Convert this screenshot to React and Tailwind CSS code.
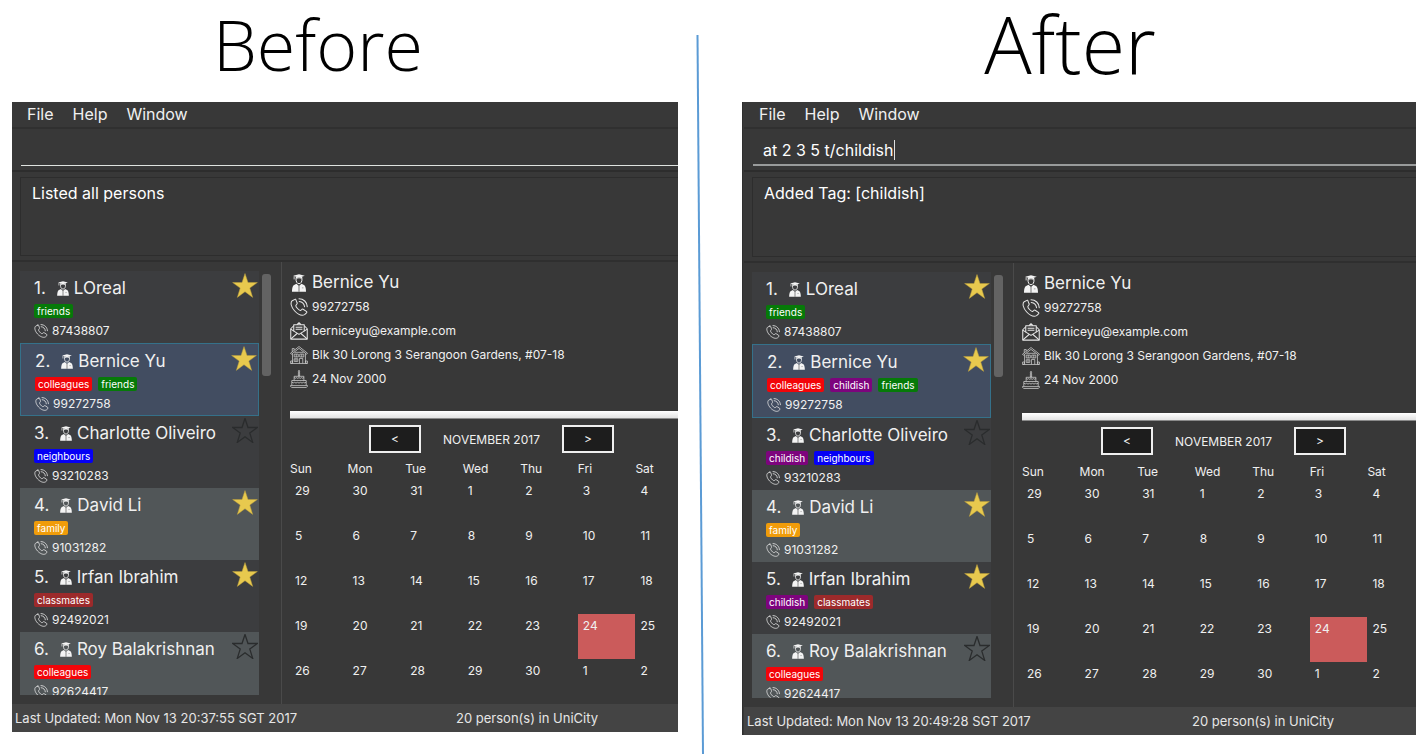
import React from "react";

const PEOPLE = [
  { name: "LOreal", phone: "87438807", star: true, before: ["friends"], after: ["friends"] },
  { name: "Bernice Yu", phone: "99272758", star: true, before: ["colleagues", "friends"], after: ["colleagues", "childish", "friends"] },
  { name: "Charlotte Oliveiro", phone: "93210283", star: false, before: ["neighbours"], after: ["childish", "neighbours"] },
  { name: "David Li", phone: "91031282", star: true, before: ["family"], after: ["family"] },
  { name: "Irfan Ibrahim", phone: "92492021", star: true, before: ["classmates"], after: ["childish", "classmates"] },
  { name: "Roy Balakrishnan", phone: "92624417", star: false, before: ["colleagues"], after: ["colleagues"] },
];

const TAG_COLORS = {
  friends: "bg-[#067a08]",
  colleagues: "bg-[#f20509]",
  childish: "bg-[#7d047d]",
  neighbours: "bg-[#0500f5]",
  family: "bg-[#f09c0a]",
  classmates: "bg-[#9c2a2b]",
};

const DAYS = ["Sun", "Mon", "Tue", "Wed", "Thu", "Fri", "Sat"];
const WEEKS = [
  [29, 30, 31, 1, 2, 3, 4],
  [5, 6, 7, 8, 9, 10, 11],
  [12, 13, 14, 15, 16, 17, 18],
  [19, 20, 21, 22, 23, 24, 25],
  [26, 27, 28, 29, 30, 1, 2],
];

function GraduateIcon({ className }) {
  return (
    <svg viewBox="0 0 16 20" className={className} aria-hidden="true">
      <path d="M8 0.4 L14.4 2 L8 4.2 L1.6 2 Z" fill="#f4f4f4" />
      <path d="M4.4 2.8 V5.2 Q8 4 11.6 5.2 V2.8 L8 4.2 Z" fill="#f4f4f4" />
      <path d="M2.6 2.4 V6" stroke="#f4f4f4" strokeWidth="0.9" />
      <path d="M4.7 5 C4.4 8.6 6 10.8 8 10.8 C10 10.8 11.6 8.6 11.3 5" fill="none" stroke="#f4f4f4" strokeWidth="1.1" />
      <path d="M5.2 10.8 L8 13.2 L10.8 10.8 L14 12.4 C15.4 13.8 15.8 17 15.8 19.8 H0.2 C0.2 17 0.6 13.8 2 12.4 Z" fill="#f4f4f4" />
      <path d="M8 13 V19.8" stroke="#555" strokeWidth="0.9" />
      <path d="M11.2 15.4 h1.8" stroke="#777" strokeWidth="0.7" />
    </svg>
  );
}

function PhoneIcon({ className }) {
  return (
    <svg viewBox="0 0 24 24" className={className} fill="none" stroke="#e6e6e6" strokeWidth="1.4" strokeLinejoin="round" strokeLinecap="round" aria-hidden="true">
      <path d="M6.5 1.8 L3 3.6 C0 6 1.5 12 6 17 C10.5 21.8 16 24 19.5 22.2 L22 19.9 C22.6 19.2 22.4 18.4 21.8 17.8 L17.5 15 C16.8 14.6 16 14.8 15.5 15.4 L14.3 16.4 C13.5 17 12 16.2 10 14 C8 11.7 7.4 10.4 8 9.6 L9.2 8 C9.7 7.4 9.7 6.8 9.3 6.1 L7.9 2.5 C7.6 1.8 7.1 1.5 6.5 1.8 Z" />
      <path d="M12 1 C18 1 22.8 5.5 23 11.5" />
      <path d="M12.3 4.6 C16.5 5 19 7.8 19.4 11.7" />
    </svg>
  );
}

function MailIcon({ className }) {
  return (
    <svg viewBox="0 0 24 24" className={className} fill="none" stroke="#e6e6e6" strokeWidth="1.4" strokeLinejoin="round" aria-hidden="true">
      <path d="M5 5 L1 9 V22.8 H23 V9 L19 5" />
      <path d="M9.3 3.6 L12 1 L14.7 3.6" />
      <path d="M5 12.2 V3.7 H19 V12.2" />
      <path d="M7.5 7 H16.5 M7.5 9.6 H16.5" />
      <path d="M1 9.5 L12 16.5 L23 9.5" />
      <path d="M1.2 22.6 L9.8 15 M22.8 22.6 L14.2 15" />
    </svg>
  );
}

function HouseIcon({ className }) {
  return (
    <svg viewBox="0 0 24 24" className={className} fill="none" stroke="#d2d2d2" strokeWidth="1" strokeLinejoin="round" aria-hidden="true">
      <path d="M12 0.7 L23.3 9.6 L22.2 11 L12 3.2 L1.8 11 L0.7 9.6 Z" />
      <path d="M3 7.6 V3.4 H5.6 V5.6" />
      <path d="M3.4 10 V22 M20.6 10 V22" />
      <path d="M6 8.4 H18" />
      <path d="M5.6 10.8 H11 V14.6 H5.6 Z M8.3 10.8 V14.6 M13 10.8 H18.4 V14.6 H13 Z M15.7 10.8 V14.6" />
      <path d="M12.6 23 V16.6 H17 V23 M5.6 17 H10.4 V20.5 H5.6 Z M8 17 V20.5" />
      <path d="M0.6 23.3 H23.4 M0.8 20 H3.4 V23 H0.8 Z M20.6 20 H23.2 V23 H20.6 Z" />
    </svg>
  );
}

function CakeIcon({ className }) {
  return (
    <svg viewBox="0 0 24 24" className={className} fill="none" stroke="#d2d2d2" strokeWidth="1" strokeLinejoin="round" aria-hidden="true">
      <path d="M12 0.2 C13.2 1.6 13 3 12 3 C11 3 10.8 1.6 12 0.2 Z" />
      <path d="M11.2 3.4 H12.8 V8 H11.2 Z" />
      <path d="M5.5 14 V8.4 H18.5 V14" />
      <path d="M5.5 10 Q7 12 8.6 10.2 Q10.2 12 12 10.2 Q13.6 12 15.4 10.2 Q17 12 18.5 10" />
      <path d="M2.4 20.6 V14 H21.6 V20.6" />
      <path d="M2.4 16 Q4.2 18.4 6 16.4 Q8 18.4 10 16.4 Q12 18.4 14 16.4 Q16 18.4 18 16.4 Q20 18.4 21.6 16" />
      <path d="M0.6 20.8 H23.4 V21.6 L21.8 23.3 H2.2 L0.6 21.6 Z" />
    </svg>
  );
}

function StarIcon({ filled }) {
  return (
    <svg viewBox="0 0 26 25" className="h-[25px] w-[26px]" role="img" aria-label={filled ? "Favourite" : "Not favourite"}>
      <path
        d="M13 0.5 L16 9.5 L25.4 9.5 L17.8 15.1 L20.7 24.4 L13 18.7 L5.3 24.4 L8.2 15.1 L0.6 9.5 L10 9.5 Z"
        fill={filled ? "#e8c94e" : "none"}
        stroke={filled ? "#b89c3c" : "#2a2c2d"}
        strokeWidth={filled ? "0.5" : "1.3"}
      />
    </svg>
  );
}

function PersonRow({ person, index, tags, selected, selectedHeight }) {
  const tone = selected
    ? `border border-[#35718a] bg-[#424d61] ${selectedHeight}`
    : `h-[72px] ${index % 2 ? "bg-[#515658]" : "bg-[#3c3d3f]"}`;
  return (
    <li className={`relative shrink-0 overflow-hidden pl-[14px] pt-[6px] ${tone}`}>
      <div className="flex h-[22px] items-center text-[17px] leading-[22px]">
        <span className="mr-[11px]">{index + 1}.</span>
        <GraduateIcon className="mr-[5px] h-[15px] w-[12px]" />
        <span className="whitespace-nowrap">{person.name}</span>
      </div>
      <div className="mt-[5px] flex gap-[6px]">
        {tags.map((tag) => (
          <span key={tag} className={`h-[14px] rounded-[2px] px-[3px] text-[10px] leading-[14px] text-white ${TAG_COLORS[tag]}`}>
            {tag}
          </span>
        ))}
      </div>
      <div className="mt-[5px] flex h-[16px] items-center gap-[4px] text-[12px] leading-[16px]">
        <PhoneIcon className="h-[14px] w-[14px]" />
        <span>{person.phone}</span>
      </div>
      <span className="absolute right-[1px] top-[2px]">
        <StarIcon filled={person.star} />
      </span>
    </li>
  );
}

function DetailRow({ icon: Icon, children }) {
  return (
    <div className="flex h-[24px] items-center gap-[4px] text-[12px]">
      <Icon className="h-[18px] w-[18px] shrink-0" />
      <span className="whitespace-nowrap">{children}</span>
    </div>
  );
}

function Calendar({ headerHeight }) {
  return (
    <div className="w-[403px] text-[12px] text-[#f0f0f0]">
      <div className="mt-[6px] flex h-[28px] items-center pl-[79px]">
        <button type="button" aria-label="Previous month" className="h-[28px] w-[52px] border-2 border-[#efefef] bg-[#1d1d1d] leading-[24px]">
          &lt;
        </button>
        <span className="w-[141px] whitespace-nowrap pt-[2px] text-center">NOVEMBER 2017</span>
        <button type="button" aria-label="Next month" className="h-[28px] w-[52px] border-2 border-[#efefef] bg-[#1d1d1d] leading-[24px]">
          &gt;
        </button>
      </div>
      <table className="w-full table-fixed border-collapse">
        <thead>
          <tr className={headerHeight}>
            {DAYS.map((d) => (
              <th key={d} scope="col" className="p-0 pt-[6px] text-left align-middle font-normal">
                {d}
              </th>
            ))}
          </tr>
        </thead>
        <tbody>
          {WEEKS.map((week, w) => (
            <tr key={w} className="h-[45px]">
              {week.map((day) => (
                <td key={day} className={`p-0 pl-[5px] pt-[4px] align-top leading-[16px] ${day === 24 ? "bg-[#cb5b5b]" : ""}`}>
                  {day}
                </td>
              ))}
            </tr>
          ))}
        </tbody>
      </table>
    </div>
  );
}

const SIZES = {
  before: {
    frame: "",
    underline: "border-b border-[#dfe3e0]",
    result: "h-[79px]",
    list: "h-[424px]",
    selected: "h-[73px]",
    detail: "pl-[8px]",
    rule: "mt-[20px]",
    head: "h-[26px]",
  },
  after: {
    frame: "border-l border-[#2f2f2f] pl-px",
    underline: "border-b-2 border-[#999b9b]",
    result: "h-[80px]",
    list: "h-[426px]",
    selected: "h-[74px]",
    detail: "pl-[8px]",
    rule: "mt-[21px]",
    head: "h-[27px]",
  },
};

function AddressBook({ variant, command, result, updated }) {
  const s = SIZES[variant];
  return (
    <div className={`overflow-hidden bg-[#383838] text-[#f0f0f0] ${s.frame}`}>
      <nav className="flex h-[27px] gap-[19px] border-b-2 border-[#303030] pl-[15px] text-[16px] leading-[24px]">
        <button type="button" className="h-[22px]">File</button>
        <button type="button" className="h-[22px]">Help</button>
        <button type="button" className="h-[22px]">Window</button>
      </nav>

      <div className="h-[43px] border-b-2 border-[#2d2d2d] pl-[9px]">
        <div className={`flex h-[37px] items-center pl-[10px] pt-[6px] text-[16px] ${s.underline}`}>
          <input
            type="text"
            aria-label={`Command (${variant})`}
            defaultValue={command}
            className={`h-[24px] bg-transparent text-white outline-none ${command ? "field-sizing-content" : "w-full"}`}
          />
          {command && <span className="h-[20px] w-px bg-[#e0e0e0]" />}
        </div>
      </div>

      <div className="border-b-2 border-[#2f2f2f] pb-[4px] pl-[8px] pt-[5px]">
        <output className={`block border border-r-0 border-[#2d2d2d] pl-[11px] pt-[4px] text-[16px] leading-[22px] text-white ${s.result}`}>
          {result}
        </output>
      </div>

      <div className="flex">
        <div className="flex w-[270px] shrink-0 gap-[3px] border-r border-[#4a4a4a] pb-[9px] pl-[8px] pt-[9px]">
          <ol className={`flex w-[239px] flex-col overflow-hidden ${s.list}`}>
            {PEOPLE.map((p, i) => (
              <PersonRow key={p.name} person={p} index={i} tags={p[variant]} selected={i === 1} selectedHeight={s.selected} />
            ))}
          </ol>
          <div className="mt-[3px] h-[102px] w-[9px] rounded-[3px] bg-[#636363]" />
        </div>

        <div className={`min-w-0 flex-1 overflow-hidden pt-[9px] ${s.detail}`}>
          <div className="flex h-[24px] items-center gap-[4px] text-[17px]">
            <GraduateIcon className="h-[18px] w-[18px]" />
            <span>Bernice Yu</span>
          </div>
          <DetailRow icon={PhoneIcon}>99272758</DetailRow>
          <DetailRow icon={MailIcon}>berniceyu@example.com</DetailRow>
          <DetailRow icon={HouseIcon}>Blk 30 Lorong 3 Serangoon Gardens, #07-18</DetailRow>
          <DetailRow icon={CakeIcon}>24 Nov 2000</DetailRow>
          <div className={`h-[8px] border-b border-[#8a8a8a] bg-linear-to-b from-white to-[#e2e2e2] ${s.rule}`} />
          <Calendar headerHeight={s.head} />
        </div>
      </div>

      <footer className="flex h-[28px] items-center bg-[#444444] pt-[2px] text-[13px] text-[#e6e6e6]">
        <span className="w-2/3 pl-[3px]">{updated}</span>
        <span>20 person(s) in UniCity</span>
      </footer>
    </div>
  );
}

export default function App() {
  return (
    <main className="flex min-h-screen bg-white pl-[12px] pr-[10px] font-['Inter',sans-serif]">
      <section className="min-w-0 flex-[666]">
        <h1 className="h-[102px] pr-[54px] text-center font-['Open_Sans',sans-serif] text-[70px] font-[350] leading-[88px] text-black">Before</h1>
        <AddressBook variant="before" command="" result="Listed all persons" updated="Last Updated: Mon Nov 13 20:37:55 SGT 2017" />
      </section>

      <div className="flex w-[64px] shrink-0 pt-[35px]" aria-hidden="true">
        <svg viewBox="0 0 64 719" preserveAspectRatio="none" className="w-full">
          <path d="M19.5 0 L25 719" stroke="#5b9bd5" strokeWidth="2" />
        </svg>
      </div>

      <section className="min-w-0 flex-[674]">
        <h1 className="h-[102px] pr-[18px] text-center font-['Open_Sans',sans-serif] text-[79px] font-[350] leading-[88px] text-black">After</h1>
        <AddressBook variant="after" command="at 2 3 5 t/childish" result="Added Tag: [childish]" updated="Last Updated: Mon Nov 13 20:49:28 SGT 2017" />
      </section>
    </main>
  );
}
